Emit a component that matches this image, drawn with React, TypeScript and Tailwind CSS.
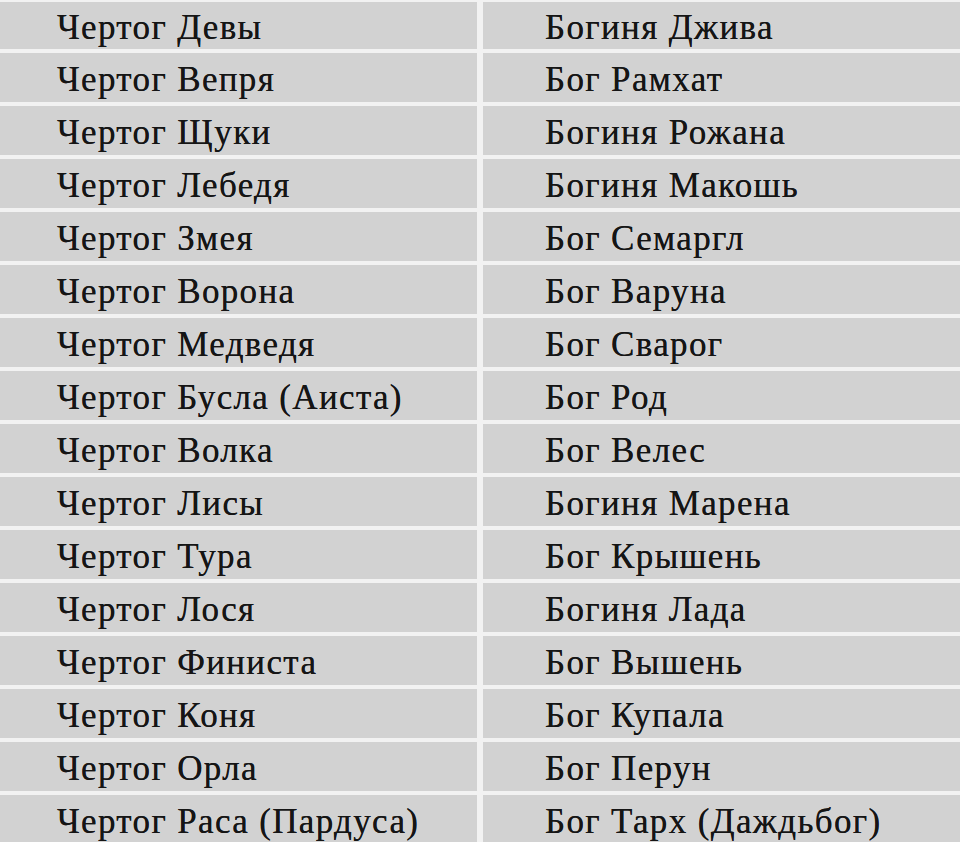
const rows: [string, string][] = [
  ['Чертог Девы', 'Богиня Джива'],
  ['Чертог Вепря', 'Бог Рамхат'],
  ['Чертог Щуки', 'Богиня Рожана'],
  ['Чертог Лебедя', 'Богиня Макошь'],
  ['Чертог Змея', 'Бог Семаргл'],
  ['Чертог Ворона', 'Бог Варуна'],
  ['Чертог Медведя', 'Бог Сварог'],
  ['Чертог Бусла (Аиста)', 'Бог Род'],
  ['Чертог Волка', 'Бог Велес'],
  ['Чертог Лисы', 'Богиня Марена'],
  ['Чертог Тура', 'Бог Крышень'],
  ['Чертог Лося', 'Богиня Лада'],
  ['Чертог Финиста', 'Бог Вышень'],
  ['Чертог Коня', 'Бог Купала'],
  ['Чертог Орла', 'Бог Перун'],
  ['Чертог Раса (Пардуса)', 'Бог Тарх (Даждьбог)'],
]

export default function App() {
  return (
    <div
      className="w-[960px] h-[842px] overflow-hidden bg-[#f2f2f2] pt-[2px] flex flex-col gap-[4px] text-[35px] tracking-[1.35px] text-[#151515] [text-shadow:0_0_0.6px_#222]"
      style={{ fontFamily: '"Liberation Serif", "Times New Roman", serif' }}
    >
      {rows.map(([hall, god], i) => (
        <div key={hall} className="grid grid-cols-[477px_1fr] gap-x-[6px] shrink-0">
          {/* left: чертог */}
          <div className={`${i === 0 ? 'h-[47px]' : 'h-[49px]'} bg-[#d2d2d2] pl-[57px] pt-[3px] flex items-center`}>
            <span className="leading-none">{hall}</span>
          </div>
          {/* right: покровитель */}
          <div className={`${i === 0 ? 'h-[47px]' : 'h-[49px]'} bg-[#d2d2d2] pl-[62px] pt-[3px] flex items-center`}>
            <span className="leading-none">{god}</span>
          </div>
        </div>
      ))}
    </div>
  )
}
